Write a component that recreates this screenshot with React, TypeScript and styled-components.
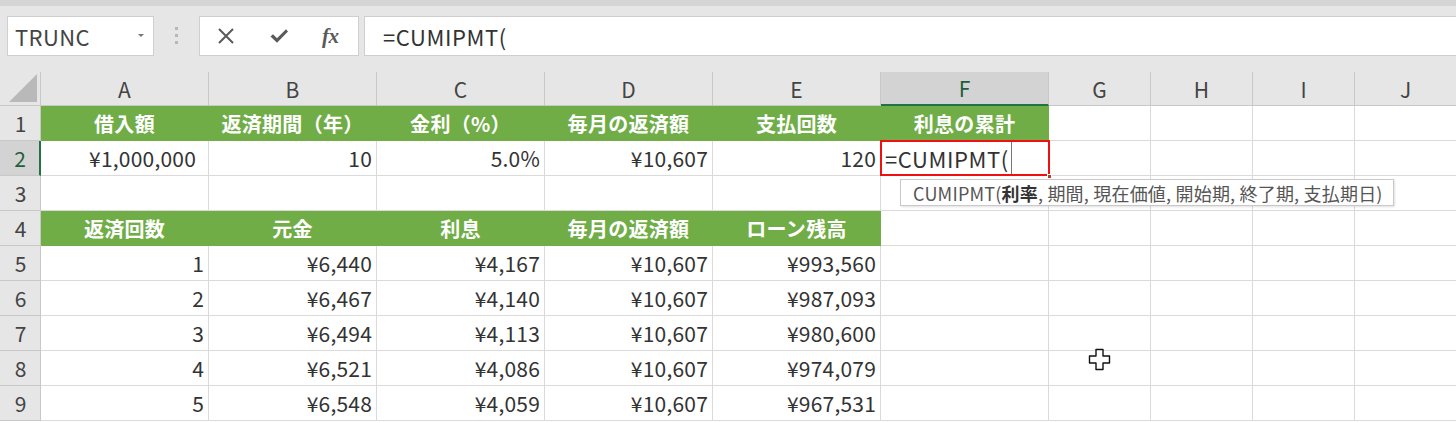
import React from "react";
import styled, { createGlobalStyle, css } from "styled-components";

const GREEN = "#70ad47";
const GRID = "#dadada";
const HEADER_BG = "#e6e6e6";
const HEADER_LINE = "#c8c8c8";
const SEL_BG = "#d3d3d3";
const SEL_LINE = "#217346";

const GlobalStyle = createGlobalStyle`
  html, body { margin: 0; padding: 0; background: #fff; overflow: hidden; }
  *, *::before, *::after { box-sizing: border-box; }
  body {
    font-family: "Noto Sans CJK JP", "Noto Sans", sans-serif;
    color: #333;
  }
`;

const Page = styled.div`
  position: relative;
  width: 1456px;
  height: 423px;
  overflow: hidden;
  background: #fff;
`;

/* ---------- formula bar ---------- */

const Toolbar = styled.div`
  display: flex;
  align-items: flex-start;
  height: 72px;
  background: ${HEADER_BG};
  border-top: 6px solid #d5d5d5;
  padding: 10px 0 16px 7px;
`;

const Box = styled.div`
  height: 40px;
  background: #fff;
  border: 1px solid #cfcfcf;
  display: flex;
  align-items: center;
`;

const NameBox = styled(Box)`
  width: 147px;
  padding: 0 9px 0 7px;
  justify-content: space-between;
  font-size: 22px;
  letter-spacing: 0.4px;
  color: #444;
`;

const DropArrow = styled.span`
  width: 0;
  height: 0;
  border-left: 3px solid transparent;
  border-right: 3px solid transparent;
  border-top: 3px solid #777;
  margin-top: -2px;
`;

const Grip = styled.div`
  width: 45px;
  height: 40px;
  display: flex;
  flex-direction: column;
  align-items: center;
  justify-content: center;
  gap: 4px;
  margin-top: -1px;
`;

const GripDot = styled.span`
  width: 3px;
  height: 3px;
  background: #b8b8b8;
`;

const ButtonsBox = styled(Box)`
  width: 160px;
`;

const IconButton = styled.span`
  width: 54px;
  height: 38px;
  display: flex;
  align-items: center;
  justify-content: center;
  color: #5a5a5a;
`;

const FxText = styled.span`
  font-family: "Liberation Serif", "DejaVu Serif", serif;
  font-style: italic;
  font-weight: bold;
  font-size: 21px;
  color: #5a5a5a;
  letter-spacing: -0.5px;
  margin-left: -3px;
`;

const FormulaInput = styled(Box)`
  flex: 1;
  margin-left: 5px;
  margin-right: -2px;
  padding-left: 18px;
  font-size: 22px;
  letter-spacing: 0.6px;
  color: #333;
`;

/* ---------- sheet ---------- */

const Sheet = styled.div`
  display: grid;
  grid-template-columns: 41px repeat(6, 168px) repeat(4, 102px);
  grid-template-rows: 34px;
  grid-auto-rows: 35px;
`;

const Corner = styled.div`
  background: ${HEADER_BG};
  border-right: 1px solid ${HEADER_LINE};
  border-bottom: 1px solid ${HEADER_LINE};
  display: flex;
  align-items: flex-end;
  justify-content: flex-end;
  padding: 0 3px 3px 0;
`;

const ColHeader = styled.div<{ $selected?: boolean }>`
  background: ${HEADER_BG};
  border-right: 1px solid ${HEADER_LINE};
  border-bottom: 1px solid ${HEADER_LINE};
  display: flex;
  align-items: center;
  justify-content: center;
  font-size: 21px;
  color: #444;
  ${(p) =>
    p.$selected &&
    css`
      background: ${SEL_BG};
      color: #1e5e3a;
      border-bottom: 2px solid ${SEL_LINE};
    `}
`;

const RowHeader = styled.div<{ $selected?: boolean }>`
  background: ${HEADER_BG};
  border-right: 1px solid ${HEADER_LINE};
  border-bottom: 1px solid ${HEADER_LINE};
  display: flex;
  align-items: center;
  justify-content: center;
  font-size: 21px;
  color: #444;
  padding-left: 1px;
  ${(p) =>
    p.$selected &&
    css`
      background: ${SEL_BG};
      color: #1e5e3a;
      border-right: 2px solid ${SEL_LINE};
    `}
`;

const Cell = styled.div<{
  $fill?: boolean;
  $align?: "center" | "right" | "left";
  $padRight?: number;
}>`
  position: relative;
  display: flex;
  align-items: center;
  justify-content: ${(p) =>
    p.$align === "center" ? "center" : p.$align === "left" ? "flex-start" : "flex-end"};
  padding: 0 ${(p) => p.$padRight ?? 4}px 0 4px;
  font-size: 21px;
  letter-spacing: 0.2px;
  color: #333;
  white-space: nowrap;
  border-right: 1px solid ${GRID};
  border-bottom: 1px solid ${GRID};
  ${(p) =>
    p.$fill &&
    css`
      background: ${GREEN};
      border-color: ${GREEN};
      color: #fff;
      font-weight: bold;
      font-size: 20px;
      letter-spacing: 0.3px;
    `}
`;

const EditCell = styled(Cell)`
  z-index: 3;
  padding-left: 4px;
  font-size: 22px;
  letter-spacing: 0.6px;
  &::after {
    content: "";
    position: absolute;
    left: -1px;
    top: -1px;
    right: -2px;
    bottom: -1px;
    border: 2px solid #f01010;
    pointer-events: none;
  }
`;

const Caret = styled.span`
  display: inline-block;
  width: 1px;
  height: 34px;
  background: #777;
  margin-left: 2px;
`;

const FillHandle = styled.span`
  position: absolute;
  right: -4px;
  bottom: -4px;
  width: 5px;
  height: 5px;
  background: #c0392b;
  border: 1px solid #fff;
  z-index: 4;
`;

const Tooltip = styled.div`
  position: absolute;
  left: 19px;
  top: 38px;
  height: 27px;
  padding: 0 10px 0 12px;
  display: flex;
  align-items: center;
  background: #fff;
  border: 1px solid #c9c9c9;
  box-shadow: 1px 1px 2px rgba(0, 0, 0, 0.12);
  font-size: 18px;
  letter-spacing: 0.2px;
  font-weight: normal;
  color: #555;
  white-space: nowrap;
  z-index: 5;
`;

const Bold = styled.b`
  font-weight: bold;
  color: #333;
`;

const Pointer = styled.svg`
  position: absolute;
  left: 1088px;
  top: 348px;
  z-index: 6;
`;

const COLS = ["A", "B", "C", "D", "E", "F", "G", "H", "I", "J"];

type Row = { cells: (string | null)[]; fill?: number };

const rows: Row[] = [
  {
    cells: ["借入額", "返済期間（年）", "金利（%）", "毎月の返済額", "支払回数", "利息の累計"],
    fill: 6,
  },
  { cells: ["¥1,000,000", "10", "5.0%", "¥10,607", "120", null] },
  { cells: [] },
  { cells: ["返済回数", "元金", "利息", "毎月の返済額", "ローン残高"], fill: 5 },
  { cells: ["1", "¥6,440", "¥4,167", "¥10,607", "¥993,560"] },
  { cells: ["2", "¥6,467", "¥4,140", "¥10,607", "¥987,093"] },
  { cells: ["3", "¥6,494", "¥4,113", "¥10,607", "¥980,600"] },
  { cells: ["4", "¥6,521", "¥4,086", "¥10,607", "¥974,079"] },
  { cells: ["5", "¥6,548", "¥4,059", "¥10,607", "¥967,531"] },
];

export default function App() {
  return (
    <Page>
      <GlobalStyle />
      <Toolbar>
        <NameBox>
          <span>TRUNC</span>
          <DropArrow />
        </NameBox>
        <Grip>
          <GripDot />
          <GripDot />
          <GripDot />
        </Grip>
        <ButtonsBox>
          <IconButton>
            <svg width="18" height="18" viewBox="0 0 18 18">
              <path d="M2 2 L16 16 M16 2 L2 16" stroke="#5a5a5a" strokeWidth="2" fill="none" />
            </svg>
          </IconButton>
          <IconButton>
            <svg width="20" height="16" viewBox="0 0 20 16">
              <path d="M1.5 8.5 L4 6.3 L8 10.3 L17 1.3 L19 3.6 L8 14.8 Z" fill="#5a5a5a" />
            </svg>
          </IconButton>
          <IconButton>
            <FxText>fx</FxText>
          </IconButton>
        </ButtonsBox>
        <FormulaInput>=CUMIPMT(</FormulaInput>
      </Toolbar>

      <Sheet>
        <Corner>
          <svg width="28" height="28" viewBox="0 0 28 28">
            <polygon points="28,0 28,28 0,28" fill="#b9b9b9" />
          </svg>
        </Corner>
        {COLS.map((c) => (
          <ColHeader key={c} $selected={c === "F"}>
            {c}
          </ColHeader>
        ))}
        {rows.map((row, ri) => (
          <React.Fragment key={ri}>
            <RowHeader $selected={ri === 1}>{ri + 1}</RowHeader>
            {COLS.map((c, ci) => {
              const isFill = row.fill !== undefined && ci < row.fill;
              if (ri === 1 && c === "F") {
                return (
                  <EditCell key={c} $align="left">
                    =CUMIPMT(
                    <Caret />
                    <FillHandle />
                    <Tooltip>
                      CUMIPMT(<Bold>利率</Bold>, 期間, 現在価値, 開始期, 終了期, 支払期日)
                    </Tooltip>
                  </EditCell>
                );
              }
              return (
                <Cell
                  key={c}
                  $fill={isFill}
                  $align={isFill ? "center" : "right"}
                  $padRight={ri === 1 && ci === 0 ? 12 : 4}
                >
                  {row.cells[ci] ?? ""}
                </Cell>
              );
            })}
          </React.Fragment>
        ))}
      </Sheet>

      <Pointer width="24" height="24" viewBox="0 0 24 24">
        <path
          d="M8 1.5 H15 V8 H21.5 V15 H15 V21.5 H8 V15 H1.5 V8 H8 Z"
          fill="#fff"
          stroke="#111"
          strokeWidth="1.4"
          strokeLinejoin="round"
        />
      </Pointer>
    </Page>
  );
}
